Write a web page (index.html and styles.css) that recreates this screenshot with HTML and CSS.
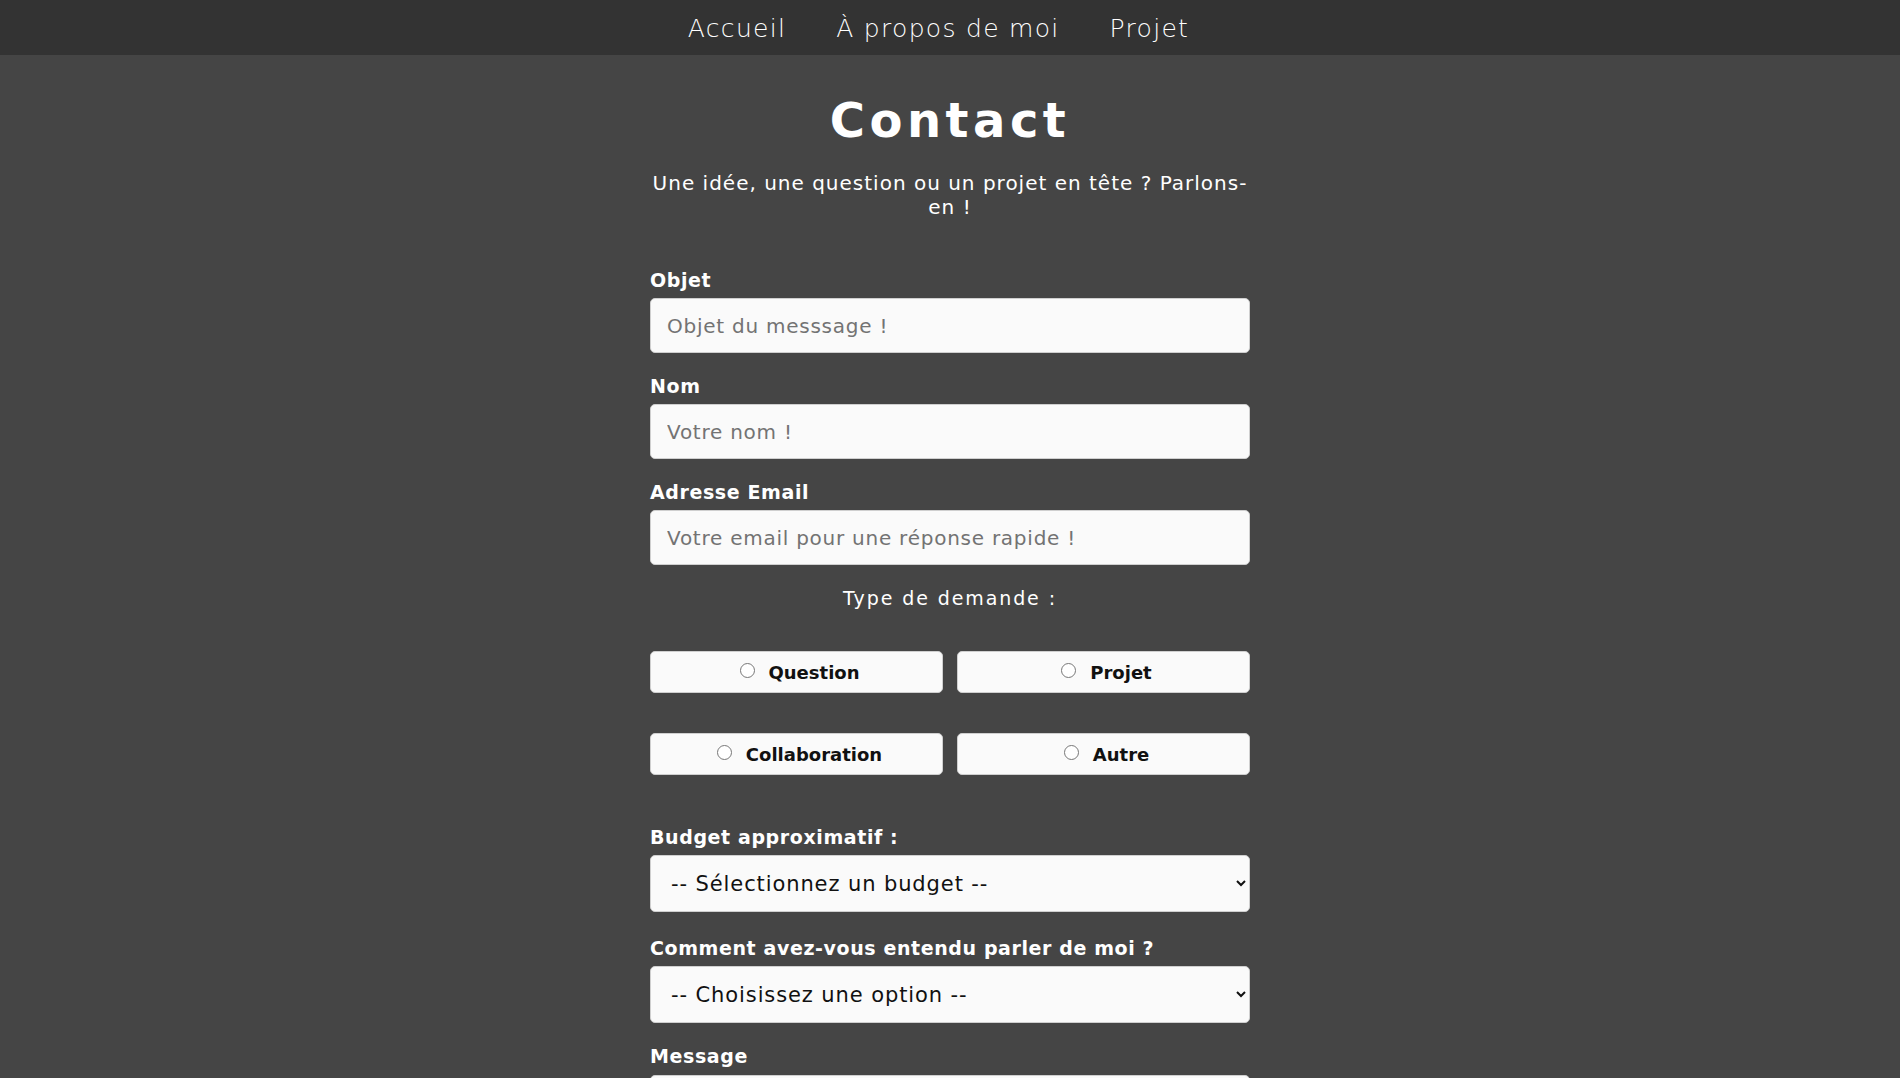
FILE: index.html
```html
<!DOCTYPE html>
<html lang="fr">
<head>
<meta charset="utf-8">
<title>Contact</title>
<link rel="stylesheet" href="styles.css">
</head>
<body>
<nav class="topnav">
  <ul class="nav-list">
    <li><a href="#" class="nav-link">Accueil</a></li>
    <li><a href="#" class="nav-link">À propos de moi</a></li>
    <li><a href="#" class="nav-link">Projet</a></li>
  </ul>
</nav>
<main class="contact">
  <h1 class="title">Contact</h1>
  <p class="intro">Une idée, une question ou un projet en tête ? Parlons-en !</p>
  <form class="form">
    <label class="field-label" for="objet">Objet</label>
    <input class="field-input" id="objet" type="text" placeholder="Objet du messsage !">
    <label class="field-label gap" for="nom">Nom</label>
    <input class="field-input" id="nom" type="text" placeholder="Votre nom !">
    <label class="field-label gap" for="email">Adresse Email</label>
    <input class="field-input" id="email" type="email" placeholder="Votre email pour une réponse rapide !">
    <p class="type-title">Type de demande :</p>
    <div class="choices">
      <label class="choice"><input type="radio" name="type" class="radio">Question</label>
      <label class="choice"><input type="radio" name="type" class="radio">Projet</label>
      <label class="choice"><input type="radio" name="type" class="radio">Collaboration</label>
      <label class="choice"><input type="radio" name="type" class="radio">Autre</label>
    </div>
    <label class="field-label budget" for="budget">Budget approximatif :</label>
    <select class="field-select" id="budget">
      <option>-- Sélectionnez un budget --</option>
    </select>
    <label class="field-label gap2" for="source">Comment avez-vous entendu parler de moi ?</label>
    <select class="field-select" id="source">
      <option>-- Choisissez une option --</option>
    </select>
    <label class="field-label gap" for="message">Message</label>
    <textarea class="field-area" id="message"></textarea>
  </form>
</main>
</body>
</html>
```

FILE: styles.css
```css
* { box-sizing: border-box; }
html, body { margin: 0; padding: 0; }
body {
  background: #454545;
  font-family: "DejaVu Sans", Inter, sans-serif;
  color: #ffffff;
}
.topnav {
  background: #333333;
  height: 55px;
}
.nav-list {
  list-style: none;
  margin: 0;
  padding: 2px 23px 0 0;
  height: 55px;
  display: flex;
  justify-content: center;
  align-items: center;
  gap: 50px;
}
.nav-link {
  color: #ffffff;
  text-decoration: none;
  font-size: 25px;
  font-weight: 200;
  letter-spacing: 1.3px;
}
.contact {
  width: 600px;
  margin: 0 auto;
  display: flex;
  flex-direction: column;
}
.title {
  margin: 36px 0 0;
  font-size: 48px;
  line-height: 58px;
  font-weight: 700;
  text-align: center;
  letter-spacing: 4.5px;
}
.intro {
  margin: 22px 0 0;
  font-size: 20px;
  line-height: 24px;
  text-align: center;
  letter-spacing: 1px;
}
.form {
  display: flex;
  flex-direction: column;
  margin-top: 49px;
}
.field-label {
  display: block;
  font-size: 19px;
  line-height: 24px;
  font-weight: 700;
  letter-spacing: 0.6px;
  margin-bottom: 6px;
}
.field-label.gap { margin-top: 21px; }
.field-label.gap2 { margin-top: 24px; }
.field-label.budget { margin-top: 50px; }
.field-input, .field-select, .field-area {
  width: 100%;
  background: #fafafa;
  border: 1px solid #cfcfcf;
  border-radius: 5px;
  font-family: inherit;
  color: #111111;
}
.field-input {
  height: 55px;
  padding: 0 16px;
  font-size: 20px;
  letter-spacing: 0.75px;
}
.field-input::placeholder { color: #737373; }
.field-select {
  height: 57px;
  padding: 0 14px 0 16px;
  font-size: 21px;
  letter-spacing: 0.9px;
}
.field-area {
  height: 150px;
  margin-top: 1px;
}
.type-title {
  margin: 21px 0 0;
  font-size: 19px;
  line-height: 24px;
  text-align: center;
  letter-spacing: 1.9px;
}
.choices {
  margin-top: 41px;
  display: grid;
  grid-template-columns: 1fr 1fr;
  column-gap: 14px;
  row-gap: 40px;
}
.choice {
  height: 42px;
  background: #fafafa;
  border: 1px solid #cfcfcf;
  border-radius: 5px;
  display: flex;
  justify-content: center;
  align-items: center;
  gap: 14px;
  color: #111111;
  font-size: 18px;
  font-weight: 700;
  padding-left: 6px;
}
.radio {
  width: 15px;
  height: 15px;
  margin: 0 0 4px 0;
}
```
